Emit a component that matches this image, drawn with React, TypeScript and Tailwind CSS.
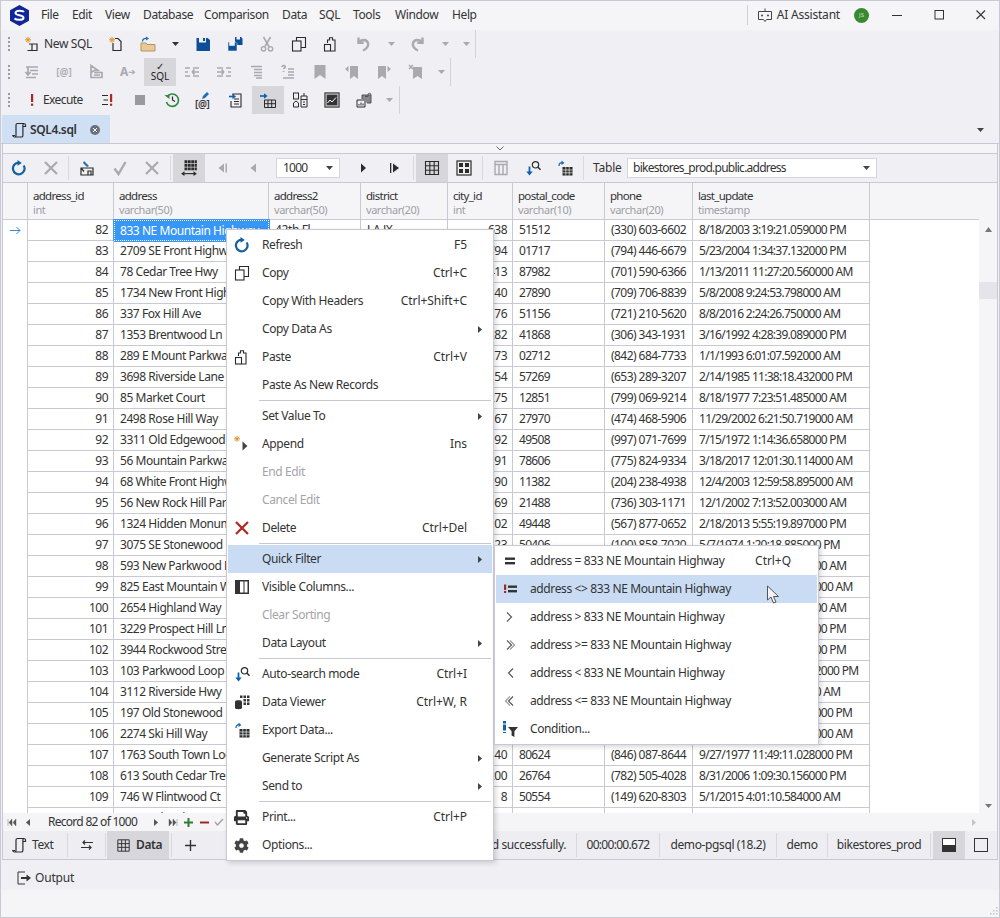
import type { ReactNode } from "react";
import { FaCog, FaPrint } from "react-icons/fa";

const Svg = ({ children, size = 16 }: { children: ReactNode; size?: number }) => (
  <svg width={size} height={size} viewBox="0 0 16 16" fill="none">
    {children}
  </svg>
);

const DARK = "#2b2b2b";
const GREY = "#a9a9ae";
const BLUE = "#15609f";

const Star = () => (
  <path d="M4 .8v6M1 3.8h6M1.9 1.7l4.2 4.2M6.1 1.7 1.9 5.9" stroke="#e0952a" strokeWidth="1" />
);
const Caret = ({ color = "#55555a" }: { color?: string }) => (
  <svg width="7" height="4" viewBox="0 0 7 4">
    <path d="M0 0h7L3.5 4z" fill={color} />
  </svg>
);
const Scroll = ({ color = DARK }: { color?: string }) => (
  <path
    d="M3 13.5H.8c.2 1 .8 1.5 1.7 1.5h6.8c1 0 1.6-.7 1.6-1.6V3c0-1 .6-1.5 1.5-1.5H5.5C4.5 1.5 4 2 4 3v10.5c0 1-.5 1.5-1.3 1.5M12 1.5c1 0 1.5.6 1.5 1.5v1.5H11"
    stroke={color}
    strokeWidth="1.2"
  />
);
const NewSqlIcon = () => (
  <Svg>
    <Star />
    <path d="M5 8h8v6.5H7M13 8v-.5M3.5 14.500H7c.5 0 1-.5 1-1V8" stroke={DARK} strokeWidth="1.2" />
  </Svg>
);
const NewDocIcon = () => (
  <Svg>
    <Star />
    <path d="M7 2.500h3l3 3v9H5V7" stroke={DARK} strokeWidth="1.2" />
  </Svg>
);
const OpenIcon = () => (
  <Svg>
    <path d="M1 7h5l1 1.500h8V15H1z" fill="#e9c998" stroke="#b8945c" />
    <path d="M2.500 5.500c0-2.500 2-3.500 4.500-3" stroke="#1c6fb8" strokeWidth="1.3" />
    <path d="M6 .5 9 2.600 6 4.600z" fill="#1c6fb8" />
  </Svg>
);
const SaveIcon = () => (
  <Svg>
    <path d="M1.500 2h2.500v4.500h7V2h1.500L15 4v11H1.500z" fill="#0b4f96" />
    <rect x="8" y="2" width="2" height="3" fill="#0b4f96" />
  </Svg>
);
const SaveAllIcon = () => (
  <Svg>
    <path d="M8 1h1.500v2.500h3.500V1h1l1.500 1.500V9H8z" fill="#0b4f96" />
    <path d="M1 6h1.500v3.500h5V6h1L10 7.500V15H1z" fill="#0b4f96" stroke="#f0eff4" strokeWidth=".6" />
  </Svg>
);
const CutIcon = () => (
  <Svg>
    <path d="M4.500 1 10 10.500M11.500 1 6 10.500" stroke={GREY} strokeWidth="1.6" />
    <circle cx="4.500" cy="12.800" r="2.200" stroke={GREY} strokeWidth="1.4" />
    <circle cx="11.500" cy="12.800" r="2.200" stroke={GREY} strokeWidth="1.4" />
  </Svg>
);
const CopyIcon = () => (
  <Svg>
    <path d="M5.500 5V1.500h9v10H10" stroke={DARK} strokeWidth="1.1" />
    <rect x="1.500" y="5" width="8.500" height="10" stroke={DARK} strokeWidth="1.1" />
  </Svg>
);
const PasteIcon = () => (
  <Svg>
    <path d="M4.500 7V4h2V1.800h3V4h2.500v11H8" stroke={DARK} strokeWidth="1.1" />
    <rect x="1.500" y="8.500" width="6" height="6.500" stroke={DARK} strokeWidth="1.1" />
  </Svg>
);
const UndoIcon = ({ flip }: { flip?: boolean }) => (
  <Svg>
    <g transform={flip ? "translate(16 0) scale(-1 1)" : undefined}>
      <path d="M3.500 1.500v5.200h5.200" stroke={GREY} strokeWidth="2.400" />
      <path d="M3.800 6.500C6 3.500 11 3 12.800 6.400 14.300 9.600 11.500 13 8 14.500" stroke={GREY} strokeWidth="2.400" />
    </g>
  </Svg>
);
const Lines = ({ d, color = GREY }: { d: string; color?: string }) => (
  <Svg>
    <path d={d} stroke={color} strokeWidth="1.7" />
  </Svg>
);
const ExecIcon = () => (
  <Svg>
    <rect x="7" y="2" width="2.200" height="8" fill="#a52a22" />
    <rect x="7" y="11.600" width="2.200" height="2.200" fill="#a52a22" />
  </Svg>
);
const ExecLinesIcon = () => (
  <Svg>
    <path d="M2 3.500h6M3.500 8h4.500M2 12.500h6" stroke={DARK} strokeWidth="1.2" />
    <rect x="10" y="2" width="2.200" height="8" fill="#b3261e" />
    <rect x="10" y="11.600" width="2.200" height="2.200" fill="#b3261e" />
  </Svg>
);
const HistoryIcon = () => (
  <Svg>
    <path d="M3 5a6.200 6.200 0 1 1-.6 5" stroke="#2d8a3c" strokeWidth="1.6" />
    <path d="M.5 3h5v4z" fill="#2d8a3c" />
    <path d="M8.500 4.500V8l2.500 1.500" stroke={DARK} strokeWidth="1.2" />
  </Svg>
);
const AtPencilIcon = () => (
  <div className="relative h-[18px] w-[16px]">
    <span className="absolute bottom-0 left-[-1px] text-[10px] leading-none font-semibold text-[#333]">[@]</span>
    <svg className="absolute top-0 left-[5px]" width="9" height="9" viewBox="0 0 9 9">
      <path d="M1 8 2 5 6 1l2 2-4 4z" fill="#1f6fb0" />
    </svg>
  </div>
);
const DocArrowIcon = () => (
  <Svg>
    <path d="M5 3.500V2h8v13H3V9" stroke={DARK} strokeWidth="1.1" />
    <path d="M6 7h5M6 9.500h5M6 12h5" stroke={DARK} strokeWidth="1" />
    <path d="M1 4.500h4.500" stroke="#0f5fb0" strokeWidth="1.6" />
    <path d="M4.500 1.800 8 4.500 4.500 7.200z" fill="#0f5fb0" />
  </Svg>
);
const TableArrowIcon = () => (
  <Svg>
    <path d="M4.500 8h11v7.500h-11zM8 8v7.500M11.700 8v7.500M4.500 11.700h11" stroke={DARK} strokeWidth="1" />
    <path d="M0 4h5" stroke="#0f5fb0" strokeWidth="1.6" />
    <path d="M4 1.200 7.600 4 4 6.800z" fill="#0f5fb0" />
  </Svg>
);
const BuilderIcon = () => (
  <Svg>
    <rect x="1.500" y="1" width="5" height="6" stroke={DARK} />
    <path d="M1.500 15V11L4 9l2.500 2v4z" stroke={DARK} />
    <path d="M9 4h6v11H9zM9 7.500h6M11 10h2M11 12.500h2M12 1v3" stroke={DARK} />
  </Svg>
);
const ChartIcon = () => (
  <Svg>
    <rect x="1" y="1" width="14" height="14" fill="#fff" stroke={DARK} strokeWidth="1.2" />
    <rect x="2.500" y="2.500" width="11" height="11" fill="#333" />
    <path d="m3.500 11 2.500-3 2 2 4-4.500" stroke="#fff" strokeWidth="1" />
  </Svg>
);
const StackIcon = () => (
  <Svg>
    <path d="M1 8h8v7H1z" stroke={DARK} />
    <path d="M3 13.500V12M5 13.500V10.500M7 13.500v-2" stroke={DARK} />
    <path d="M6 7V3h9v8h-4" fill="#888" stroke="#555" />
    <path d="M9 4.500h3V2.800a1.500 1.500 0 0 1 3 0" stroke="#555" />
  </Svg>
);
const RefreshIcon = () => (
  <Svg>
    <path d="M12.700 5.500a5.800 5.800 0 1 1-5-2.800" stroke={BLUE} strokeWidth="2.200" />
    <path d="M6.500 0v5.800L10.800 3z" fill={BLUE} />
  </Svg>
);
const XIcon = ({ color = GREY }: { color?: string }) => (
  <Svg>
    <path d="M2 2l12 12M14 2 2 14" stroke={color} strokeWidth="2.200" />
  </Svg>
);
const CheckIcon = () => (
  <Svg>
    <path d="m2.500 8.500 4 5.500L13.500 2" stroke={GREY} strokeWidth="2.400" />
  </Svg>
);
const ImportIcon = () => (
  <Svg>
    <path d="M2 8h12v7H2zM2 8l3 3.500M9 15v-4h3v4" stroke={DARK} strokeWidth="1.2" />
    <path d="m5 1 5 5-2 1-4-4z" fill="#1f6fb0" />
  </Svg>
);
const FitIcon = () => (
  <Svg size={18}>
    <path
      d="M4 1h2.500v2.500H4zM7 1h2.500v2.500H7zM10 1h2.500v2.500H10zM13 1h2v2.500h-2zM4 4.300h2.500v2.500H4zM7 4.300h2.500v2.500H7zM10 4.300h2.500v2.500H10zM13 4.300h2v2.500h-2zM4 7.600h2.500v2.500H4zM7 7.600h2.500v2.500H7zM10 7.600h2.500v2.500H10zM13 7.600h2v2.500h-2z"
      fill={DARK}
    />
    <path d="M3 13h10" stroke={DARK} />
    <path d="M1 13l3-2.200v4.400zM15 13l-3-2.200v4.400z" fill={DARK} />
  </Svg>
);
const TriLeft = ({ bar, color = GREY }: { bar?: boolean; color?: string }) => (
  <Svg>
    <path d="M10 3.500v9L4.500 8z" fill={color} />
    {bar && <rect x="11.500" y="3.500" width="1.500" height="9" fill={color} />}
  </Svg>
);
const TriRight = ({ bar }: { bar?: boolean }) => (
  <Svg>
    {bar && <rect x="3" y="3" width="1.300" height="10" fill={DARK} />}
    <path d={bar ? "M6 3.500v9L12 8z" : "M6 3.500v9L11 8z"} fill={DARK} />
  </Svg>
);
const GridIcon = () => (
  <Svg>
    <path d="M1.500 1.500h13v13h-13zM5.800 1.500v13M10.200 1.500v13M1.500 5.800h13M1.500 10.200h13" stroke={DARK} strokeWidth="1.1" />
  </Svg>
);
const CardsIcon = () => (
  <Svg>
    <rect x="1" y="1" width="14" height="14" stroke={DARK} strokeWidth="1.2" />
    <rect x="3" y="3" width="4" height="4" fill={DARK} />
    <rect x="9" y="3" width="4" height="4" fill={DARK} />
    <rect x="3" y="9" width="4" height="4" fill={DARK} />
    <rect x="9" y="9" width="4" height="4" fill={DARK} />
  </Svg>
);
const ColumnsGreyIcon = () => (
  <Svg>
    <path d="M2 1.500h12v13H2zM2 4.500h12M6 4.500v10M10 4.500v10" stroke={GREY} strokeWidth="1.4" />
  </Svg>
);
const SearchArrowIcon = () => (
  <Svg>
    <circle cx="10.500" cy="4.800" r="3.200" stroke={DARK} strokeWidth="1.2" />
    <path d="m13 7.200 2.500 2.600" stroke={DARK} strokeWidth="1.4" />
    <path d="M4.500 6.500v6" stroke="#0f5fb0" strokeWidth="1.8" />
    <path d="M1.300 11.500h6.400L4.500 15.500z" fill="#0f5fb0" />
  </Svg>
);
const ExportIcon = () => (
  <Svg>
    <path d="M5.500 7h10v8.500h-10z" fill={DARK} />
    <path d="M5.500 10h10M5.500 12.800h10M8.800 7v8.500M12.200 7v8.500" stroke="#f4f4f6" strokeWidth=".7" />
    <path d="M2 6c0-2.500 1.500-3.500 3.500-3.200" stroke="#1c6fb8" strokeWidth="1.3" />
    <path d="M4.500.5 7.500 3 4.500 5z" fill="#1c6fb8" />
  </Svg>
);
const ViewerIcon = () => (
  <Svg>
    <path d="M1 7.500c0-1.600 7-1.600 7 0V14c0 1.600-7 1.600-7 0z" fill="#333" />
    <path
      d="M6 1.500h2.500V4H6zM9.500 1.500H12V4H9.500zM13 1.500h2.500V4H13zM9.500 5H12v2.500H9.500zM13 5h2.500v2.500H13zM13 8.500h2.500V11H13zM9.500 8.500H12V11H9.500z"
      fill="#333"
    />
  </Svg>
);
const ColumnsIcon = () => (
  <Svg>
    <rect x="1" y="1" width="14" height="14" fill="#333" />
    <rect x="6" y="2.500" width="3.500" height="11" fill="#fff" />
    <rect x="10.500" y="2.500" width="3" height="11" fill="#fff" />
  </Svg>
);
const AppendIcon = () => (
  <Svg>
    <g transform="translate(-1 -1)">
      <Star />
    </g>
    <path d="M8.500 5.500v9l5-4.500z" fill="#444" />
  </Svg>
);
const ConditionIcon = () => (
  <Svg>
    <rect x="1" y="0" width="3" height="2.500" fill="#14609f" />
    <rect x="1" y="3.500" width="3" height="6" fill="#14609f" />
    <rect x="1" y="11" width="3" height="1" fill="#14609f" />
    <path d="M6 6h10l-3.600 4.200V16l-2.800-1.600v-4.200z" fill="#333" />
  </Svg>
);
const FilterEq = ({ bang }: { bang?: boolean }) => (
  <Svg>
    <rect x={bang ? 6 : 3} y="4.500" width={bang ? 9 : 10} height="2.400" fill="#333" />
    <rect x={bang ? 6 : 3} y="9" width={bang ? 9 : 10} height="2.400" fill="#333" />
    {bang && (
      <>
        <rect x="2" y="3.500" width="2.200" height="5.500" fill="#a52a22" />
        <rect x="2" y="10" width="2.200" height="2" fill="#a52a22" />
      </>
    )}
  </Svg>
);
const Chevron = ({ dir, twin }: { dir: "l" | "r"; twin?: boolean }) => (
  <Svg>
    <g transform={dir === "l" ? "translate(16 0) scale(-1 1)" : undefined} stroke="#555" strokeWidth="1.2">
      <path d="m5 3.500 4.500 4.500L5 12.500" />
      {twin && <path d="m8 3.500 4.500 4.500L8 12.500" stroke="#999" />}
    </g>
  </Svg>
);

const Btn = ({ children, active, w = "w-8" }: { children: ReactNode; active?: boolean; w?: string }) => (
  <div className={`flex h-7 shrink-0 items-center justify-center ${w} ${active ? "bg-[#d6d6db]" : ""}`}>{children}</div>
);
const Grip = () => (
  <div className="flex w-[15px] shrink-0 flex-col items-center gap-[2px]">
    <span className="h-[2px] w-[2px] bg-[#9a9aa2]" />
    <span className="h-[2px] w-[2px] bg-[#9a9aa2]" />
    <span className="h-[2px] w-[2px] bg-[#9a9aa2]" />
    <span className="h-[2px] w-[2px] bg-[#9a9aa2]" />
  </div>
);
const RowSep = () => <div className="h-7 w-px bg-[#d2d2da]" />;
const BarSep = ({ className = "" }: { className?: string }) => <div className={`h-[24px] w-px shrink-0 bg-[#d8d8de] ${className}`} />;

const menus = [
  ["File", "w-[31px]"],
  ["Edit", "w-[33px]"],
  ["View", "w-[38px]"],
  ["Database", "w-[61px]"],
  ["Comparison", "w-[78px]"],
  ["Data", "w-[37px]"],
  ["SQL", "w-[34px]"],
  ["Tools", "w-[42px]"],
  ["Window", "w-[57px]"],
  ["Help", "w-[34px]"],
];

type Row = [number, string, string, string, string, string, string];
const rows: Row[] = [
  [82, "833 NE Mountain Highway", "638", "51512", "(330) 603-6602", "8/18/2003 3:19:21.059000 PM", "42th Fl"],
  [83, "2709 SE Front Highway", "794", "01717", "(794) 446-6679", "5/23/2004 1:34:37.132000 PM", ""],
  [84, "78 Cedar Tree Hwy", "413", "87982", "(701) 590-6366", "1/13/2011 11:27:20.560000 AM", ""],
  [85, "1734 New Front Highway", "140", "27890", "(709) 706-8839", "5/8/2008 9:24:53.798000 AM", ""],
  [86, "337 Fox Hill Ave", "176", "51156", "(721) 210-5620", "8/8/2016 2:24:26.750000 AM", ""],
  [87, "1353 Brentwood Ln", "282", "41868", "(306) 343-1931", "3/16/1992 4:28:39.089000 PM", ""],
  [88, "289 E Mount Parkway", "173", "02712", "(842) 684-7733", "1/1/1993 6:01:07.592000 AM", ""],
  [89, "3698 Riverside Lane", "154", "57269", "(653) 289-3207", "2/14/1985 11:38:18.432000 PM", ""],
  [90, "85 Market Court", "275", "12851", "(799) 069-9214", "8/18/1977 7:23:51.485000 AM", ""],
  [91, "2498 Rose Hill Way", "167", "27970", "(474) 468-5906", "11/29/2002 6:21:50.719000 AM", ""],
  [92, "3311 Old Edgewood Court", "192", "49508", "(997) 071-7699", "7/15/1972 1:14:36.658000 PM", ""],
  [93, "56 Mountain Parkway", "191", "78606", "(775) 824-9334", "3/18/2017 12:01:30.114000 AM", ""],
  [94, "68 White Front Highway", "190", "11382", "(204) 238-4938", "12/4/2003 12:59:58.895000 AM", ""],
  [95, "56 New Rock Hill Parkway", "169", "21488", "(736) 303-1171", "12/1/2002 7:13:52.003000 AM", ""],
  [96, "1324 Hidden Monument Ave", "102", "49448", "(567) 877-0652", "2/18/2013 5:55:19.897000 PM", ""],
  [97, "3075 SE Stonewood Highway", "123", "50406", "(100) 858-7020", "5/7/1974 1:20:18.885000 PM", ""],
  [98, "593 New Parkwood Drive", "118", "30215", "(412) 557-1180", "6/14/2001 8:22:40.315000 AM", ""],
  [99, "825 East Mountain Way", "207", "64120", "(318) 220-4471", "11/19/2004 3:41:12.600000 AM", ""],
  [100, "2654 Highland Way", "144", "73091", "(605) 418-7726", "4/27/1998 6:05:33.120000 AM", ""],
  [101, "3229 Prospect Hill Ln", "231", "15847", "(209) 631-2054", "9/12/2007 2:36:08.470000 PM", ""],
  [102, "3944 Rockwood Street", "158", "90236", "(873) 145-6098", "3/24/2010 5:18:47.250000 PM", ""],
  [103, "103 Parkwood Loop", "263", "28461", "(540) 792-3316", "10/22/1985 10:32:41.612000 PM", ""],
  [104, "3112 Riverside Hwy", "176", "47703", "(761) 308-9425", "5/9/2012 9:10:44.720000 AM", ""],
  [105, "197 Old Stonewood Highway", "129", "36158", "(427) 964-0137", "12/3/1999 11:45:07.260000 PM", ""],
  [106, "2274 Ski Hill Way", "251", "82094", "(158) 573-2260", "12/6/2005 10:17:33.940000 AM", ""],
  [107, "1763 South Town Loop", "140", "80624", "(846) 087-8644", "9/27/1977 11:49:11.028000 PM", ""],
  [108, "613 South Cedar Tree", "200", "26764", "(782) 505-4028", "8/31/2006 1:09:30.156000 PM", ""],
  [109, "746 W Flintwood Ct", "8", "50554", "(149) 620-8303", "5/1/2015 4:01:10.584000 AM", ""],
  [110, "4120 Lake View Dr", "136", "71329", "(512) 774-2093", "4/22/1996 7:31:05.214000 PM", ""],
];

const columns = [
  ["address_id", "int"],
  ["address", "varchar(50)"],
  ["address2", "varchar(50)"],
  ["district", "varchar(20)"],
  ["city_id", "int"],
  ["postal_code", "varchar(10)"],
  ["phone", "varchar(20)"],
  ["last_update", "timestamp"],
];
const gridCols = "grid-cols-[25px_86px_155px_92px_87px_65px_92px_88px_177px]";

type MenuItem = {
  label?: string;
  shortcut?: string;
  icon?: ReactNode;
  arrow?: boolean;
  disabled?: boolean;
  hover?: boolean;
  sep?: boolean;
};
const contextMenu: MenuItem[] = [
  { label: "Refresh", shortcut: "F5", icon: <RefreshIcon /> },
  { label: "Copy", shortcut: "Ctrl+C", icon: <CopyIcon /> },
  { label: "Copy With Headers", shortcut: "Ctrl+Shift+C" },
  { label: "Copy Data As", arrow: true },
  { label: "Paste", shortcut: "Ctrl+V", icon: <PasteIcon /> },
  { label: "Paste As New Records" },
  { sep: true },
  { label: "Set Value To", arrow: true },
  { label: "Append", shortcut: "Ins", icon: <AppendIcon /> },
  { label: "End Edit", disabled: true },
  { label: "Cancel Edit", disabled: true },
  { label: "Delete", shortcut: "Ctrl+Del", icon: <XIcon color="#b3261e" /> },
  { sep: true },
  { label: "Quick Filter", arrow: true, hover: true },
  { label: "Visible Columns...", icon: <ColumnsIcon /> },
  { label: "Clear Sorting", disabled: true },
  { label: "Data Layout", arrow: true },
  { sep: true },
  { label: "Auto-search mode", shortcut: "Ctrl+I", icon: <SearchArrowIcon /> },
  { label: "Data Viewer", shortcut: "Ctrl+W, R", icon: <ViewerIcon /> },
  { label: "Export Data...", icon: <ExportIcon /> },
  { label: "Generate Script As", arrow: true },
  { label: "Send to", arrow: true },
  { sep: true },
  { label: "Print...", shortcut: "Ctrl+P", icon: <FaPrint size={15} color="#333" /> },
  { label: "Options...", icon: <FaCog size={15} color="#444" /> },
];
const subMenu: MenuItem[] = [
  { label: "address = 833 NE Mountain Highway", shortcut: "Ctrl+Q", icon: <FilterEq /> },
  { label: "address <> 833 NE Mountain Highway", icon: <FilterEq bang />, hover: true },
  { label: "address > 833 NE Mountain Highway", icon: <Chevron dir="r" /> },
  { label: "address >= 833 NE Mountain Highway", icon: <Chevron dir="r" twin /> },
  { label: "address < 833 NE Mountain Highway", icon: <Chevron dir="l" /> },
  { label: "address <= 833 NE Mountain Highway", icon: <Chevron dir="l" twin /> },
  { label: "Condition...", icon: <ConditionIcon /> },
];

function ContextMenuRow({ item }: { item: MenuItem }) {
  if (item.sep) return <div className="my-px ml-[31px] mr-px h-px bg-[#c9c9d4]" />;
  return (
    <div className={`flex h-7 items-center ${item.hover ? "bg-[#c9dcf4]" : ""}`}>
      <div className="flex w-[27px] shrink-0 items-center justify-center">{item.icon}</div>
      <span className={`ml-[7px] ${item.disabled ? "text-[#a4a4a8]" : "text-[#333]"}`}>{item.label}</span>
      <span className="ml-auto mr-[25px] tracking-[-0.05px] text-[#333]">{item.shortcut}</span>
      {item.arrow && (
        <svg className="absolute right-[10px]" width="4" height="7" viewBox="0 0 4 7">
          <path d="M0 0v7l4-3.500z" fill="#444" />
        </svg>
      )}
    </div>
  );
}

export default function App() {
  return (
    <div className="relative h-[918px] w-[1000px] overflow-hidden border border-[#c9c9d6] bg-[#f0eff4] font-['Noto_Sans',sans-serif] text-[12px] tracking-[-0.38px] text-[#333]">
      {/* title bar */}
      <div className="flex h-[29px] items-center bg-[#f5f5f8] pb-px">
        <svg className="ml-[8px] shrink-0" width="21" height="23" viewBox="0 0 21 23">
          <path d="M10.500 1 20 6.200v10.600L10.500 22 1 16.800V6.200z" fill="#12269c" />
          <path d="M15 8c-1-1.500-8-2-8.500 .8C6 12 15 10.500 14.500 14c-.4 2.500-7.500 2.200-9 .3" stroke="#fff" strokeWidth="2" fill="none" />
        </svg>
        <div className="ml-[2px] flex">
          {menus.map(([name, w]) => (
            <span key={name} className={`${w} shrink-0 pl-[9px] whitespace-nowrap`}>
              {name}
            </span>
          ))}
        </div>
        <div className="ml-auto h-5 w-px bg-[#d0d0d8]" />
        <svg className="ml-[9px]" width="16" height="14" viewBox="0 0 16 14" fill="none">
          <path d="M1.500 3.500h13v8h-5l-1.500 2-1.500-2h-5zM8 .5v3" stroke="#444" />
          <circle cx="5" cy="7.500" r="1" fill="#444" />
          <circle cx="11" cy="7.500" r="1" fill="#444" />
        </svg>
        <span className="ml-[4px] tracking-[-0.2px]">AI Assistant</span>
        <div className="ml-[14px] flex h-[15px] w-[15px] items-center justify-center rounded-full bg-[#38892f] text-[6px] tracking-normal text-[#cfe6c9]">
          JS
        </div>
        <svg className="ml-[22px]" width="12" height="12" viewBox="0 0 12 12">
          <path d="M1 6.500h10" stroke="#333" strokeWidth="1" />
        </svg>
        <svg className="ml-[30px]" width="12" height="12" viewBox="0 0 12 12" fill="none">
          <rect x="2" y="1.500" width="8.500" height="8.500" stroke="#333" strokeWidth="1" />
        </svg>
        <svg className="ml-[30px] mr-[12px]" width="12" height="12" viewBox="0 0 12 12" fill="none">
          <path d="M1.500 1.500l8.500 8.500M10 1.500 1.500 10" stroke="#333" strokeWidth="1.100" />
        </svg>
      </div>

      {/* toolbars */}
      <div className="flex h-7 items-center">
        <Grip />
        <Btn w="w-[84px] justify-start pl-[8px] gap-[4px]">
          <NewSqlIcon />
          <span>New SQL</span>
        </Btn>
        <Btn><NewDocIcon /></Btn>
        <Btn><OpenIcon /></Btn>
        <Btn w="w-[23px]"><Caret color="#333" /></Btn>
        <Btn><SaveIcon /></Btn>
        <Btn><SaveAllIcon /></Btn>
        <Btn><CutIcon /></Btn>
        <Btn><CopyIcon /></Btn>
        <Btn><PasteIcon /></Btn>
        <Btn><UndoIcon /></Btn>
        <Btn w="w-[24px]"><Caret color={GREY} /></Btn>
        <Btn w="w-[30px]"><UndoIcon flip /></Btn>
        <Btn w="w-[24px]"><Caret color={GREY} /></Btn>
        <Btn w="w-[18px]"><Caret color={GREY} /></Btn>
        <RowSep />
      </div>
      <div className="flex h-7 items-center">
        <Grip />
        <Btn><Lines d="M2 3h12M6 6.500h8M8 10h6M2 13.500h10M4 3v7M1.500 8 4 11l2.500-3" /></Btn>
        <Btn><span className="text-[10px] font-semibold tracking-normal text-[#a9a9ae]">[@]</span></Btn>
        <Btn><Lines d="M3 1.500v7l3-2 4 0zM6 8.500h8v5H3V9M6 11h6" /></Btn>
        <Btn>
          <span className="text-[12px] font-bold tracking-normal text-[#a9a9ae]">A</span>
          <span className="text-[9px] text-[#a9a9ae]">➔</span>
        </Btn>
        <Btn active>
          <div className="flex flex-col items-center leading-none text-[#222]">
            <span className="text-[10px] leading-[9px]">✓</span>
            <span className="text-[10px] leading-[11px] tracking-normal">SQL</span>
          </div>
        </Btn>
        <Btn><Lines d="M1 4h5M1 8h3M1 12h5M9 4h6M9 12h6M8 8h7M8 8l2.500-2.500M8 8l2.500 2.500" /></Btn>
        <Btn><Lines d="M1 4h6M1 12h6M1 8h7M8 8 5.500 5.500M8 8l-2.500 2.500M10 4h5M10 12h5M12 8h3" /></Btn>
        <Btn><Lines d="M3 2.500h11M6 5.500h8M6 8.500h8M6 11.500h8M8 14h6" /></Btn>
        <Btn><Lines d="M2 3c0-2 4-2 3 .5L3.500 5M3.500 7v1M8 5h6M8 8h6M8 11h6M3 14h11" /></Btn>
        <Btn><Svg><path d="M2.500 1h11v14L8 11l-5.500 4z" fill={GREY} /></Svg></Btn>
        <Btn><Svg><path d="M6 2h8v13l-4-3-4 3zM1 5l3.500-3v6z" fill={GREY} /></Svg></Btn>
        <Btn><Svg><path d="M2 2h8v13l-4-3-4 3zM15 5l-3.500-3v6z" fill={GREY} /></Svg></Btn>
        <Btn><Svg><path d="M5 3h9v12l-4.500-3L5 15z" fill={GREY} /><path d="m1 1 4 4m0-4L1 5" stroke={GREY} strokeWidth="1.500" /></Svg></Btn>
        <Btn w="w-[18px]"><Caret color={GREY} /></Btn>
        <RowSep />
      </div>
      <div className="flex h-7 items-center">
        <Grip />
        <Btn w="w-[76px] justify-start pl-[8px] gap-[3px]">
          <ExecIcon />
          <span className="tracking-[-0.6px]">Execute</span>
        </Btn>
        <Btn><ExecLinesIcon /></Btn>
        <Btn><Svg><rect x="3" y="3" width="10" height="10" fill="#9a9a9e" /></Svg></Btn>
        <Btn><HistoryIcon /></Btn>
        <Btn><AtPencilIcon /></Btn>
        <Btn><DocArrowIcon /></Btn>
        <Btn active><TableArrowIcon /></Btn>
        <Btn><BuilderIcon /></Btn>
        <Btn><ChartIcon /></Btn>
        <Btn><StackIcon /></Btn>
        <Btn w="w-[19px]"><Caret color={GREY} /></Btn>
        <RowSep />
      </div>

      {/* document tab strip */}
      <div className="flex h-[30px] items-end border-b border-[#c9c9d6] pl-px">
        <div className="flex h-[28px] w-[108px] items-center bg-[#cfe0f5] pl-[10px] pt-px">
          <Svg>
            <Scroll />
          </Svg>
          <span className="ml-[2px] font-semibold text-[#333]">SQL4.sql</span>
          <div className="ml-[13px] flex h-[10px] w-[10px] items-center justify-center rounded-full bg-[#6b6f7b]">
            <svg width="6" height="6" viewBox="0 0 6 6">
              <path d="m1 1 4 4m0-4L1 5" stroke="#fff" strokeWidth="1" />
            </svg>
          </div>
        </div>
        <div className="mb-[11px] ml-auto mr-[15px]">
          <Caret color="#444" />
        </div>
      </div>

      {/* data editor */}
      <div className="mx-px border-x border-[#c9c9d6]">
        <div className="flex h-[10px] items-center justify-center border-b border-[#c9c9d6] bg-[#f5f5f8]">
          <svg width="8" height="5" viewBox="0 0 8 5" fill="none">
            <path d="m.5.5 3.500 3.500L7.500.5" stroke="#666" />
          </svg>
        </div>
        <div className="flex h-[29px] items-center border-b border-[#c9c9d6]">
          <Btn><RefreshIcon /></Btn>
          <Btn><XIcon /></Btn>
          <BarSep className="ml-px mr-[2px]" />
          <Btn><ImportIcon /></Btn>
          <div className="w-px" />
          <Btn><CheckIcon /></Btn>
          <Btn><XIcon /></Btn>
          <BarSep className="ml-[2px] mr-[2px]" />
          <Btn active><FitIcon /></Btn>
          <div className="w-px" />
          <Btn><TriLeft bar /></Btn>
          <Btn><TriLeft /></Btn>
          <div className="ml-[6px] flex h-[20px] w-[64px] items-center border border-[#d5d5dc] bg-white pl-[6px]">
            <span className="tracking-[-0.8px]">1000</span>
            <div className="ml-auto mr-[6px]"><Caret color="#444" /></div>
          </div>
          <div className="w-[7px]" />
          <Btn><TriRight /></Btn>
          <Btn><TriRight bar /></Btn>
          <BarSep className="ml-[2px] mr-[2px]" />
          <Btn active><GridIcon /></Btn>
          <Btn><CardsIcon /></Btn>
          <BarSep className="ml-[2px] mr-[2px]" />
          <Btn><ColumnsGreyIcon /></Btn>
          <Btn><SearchArrowIcon /></Btn>
          <Btn><ExportIcon /></Btn>
          <BarSep className="ml-[2px]" />
          <span className="ml-[9px] w-[34px] shrink-0 tracking-[-0.2px]">Table</span>
          <div className="flex h-[20px] w-[250px] items-center border border-[#d5d5dc] bg-white pl-[5px]">
            <span className="tracking-[-0.75px]">bikestores_prod.public.address</span>
            <div className="ml-auto mr-[6px]"><Caret color="#444" /></div>
          </div>
        </div>

        {/* grid */}
        <div className="flex h-[630px]">
          <div className="flex h-full w-[977px] flex-col overflow-hidden bg-white">
            <div className={`grid h-[37px] shrink-0 ${gridCols} border-b border-[#c9c9d6] bg-[#f5f5f8]`}>
              <div className="border-r border-[#c9c9d6]" />
              {columns.map(([name, type]) => (
                <div key={name} className="flex flex-col border-r border-[#c9c9d6] pl-[5px] pt-[6px]">
                  <span className="text-[11.5px] leading-[14px] tracking-[-0.7px]">{name}</span>
                  <span className="text-[11px] leading-[13px] tracking-[-0.45px] text-[#9e9ea4]">{type}</span>
                </div>
              ))}
            </div>
            {rows.map(([id, address, city, postal, phone, ts, address2], i) => (
              <div key={id} className={`grid h-[21px] shrink-0 ${gridCols} items-stretch`}>
                <div className="flex items-center justify-center border-r border-[#c9c9d6]">
                  {i === 0 && (
                    <svg width="11" height="9" viewBox="0 0 11 9" fill="none">
                      <path d="M0 4.500h10M6.500 1 10 4.500 6.500 8" stroke="#3a86d8" />
                    </svg>
                  )}
                </div>
                <div className="flex items-center justify-end border-r border-b border-[#c9c9d6] pr-[5px] tracking-[-0.5px]">{id}</div>
                <div
                  className={
                    i === 0
                      ? "flex items-center overflow-hidden border border-dotted border-white bg-[#3897f5] pl-[5px] whitespace-nowrap tracking-[-0.45px] text-white outline outline-[#3897f5]"
                      : "flex items-center overflow-hidden border-r border-b border-[#c9c9d6] pl-[6px] whitespace-nowrap tracking-[-0.45px]"
                  }
                >
                  {address}
                </div>
                <div className="flex items-center border-r border-b border-[#c9c9d6] pl-[6px]">{address2}</div>
                <div className="flex items-center border-r border-b border-[#c9c9d6] pl-[6px]">{i === 0 ? "LA JX" : ""}</div>
                <div className="flex items-center justify-end border-r border-b border-[#c9c9d6] pr-[5px] tracking-[-0.5px]">{city}</div>
                <div className="flex items-center border-r border-b border-[#c9c9d6] pl-[6px] tracking-[-0.7px]">{postal}</div>
                <div className="flex items-center border-r border-b border-[#c9c9d6] pl-[6px] whitespace-nowrap tracking-[-0.55px]">{phone}</div>
                <div className="flex items-center border-r border-b border-[#c9c9d6] pl-[6px] whitespace-nowrap tracking-[-0.72px]">{ts}</div>
              </div>
            ))}
          </div>
          <div className="flex h-full w-[18px] flex-col items-center bg-[#f5f5f8] pt-[37px]">
            <div className="mt-[7px] h-[4px]">
              <svg width="7" height="5" viewBox="0 0 7 5">
                <path d="M0 5h7L3.500 0z" fill="#777" />
              </svg>
            </div>
            <div className="mt-[51px] h-[17px] w-full bg-[#e4e4ea]" />
            <div className="mt-auto mb-[5px]">
              <Caret color="#777" />
            </div>
          </div>
        </div>

        {/* record navigator */}
        <div className="flex h-[18px] items-center bg-[#f5f5f8] pl-[1px]">
          <svg className="ml-[3px]" width="10" height="7" viewBox="0 0 10 7">
            <path d="M1 0v7M5 0v7L2 3.500zM9 0v7L6 3.500z" fill="#555" stroke="#555" strokeWidth=".4" />
          </svg>
          <svg className="ml-[9px]" width="4" height="7" viewBox="0 0 4 7">
            <path d="M4 0v7L0 3.500z" fill="#555" />
          </svg>
          <span className="ml-[18px] w-[106px] shrink-0 tracking-[-0.72px]">Record 82 of 1000</span>
          <svg width="4" height="7" viewBox="0 0 4 7">
            <path d="M0 0v7l4-3.500z" fill="#555" />
          </svg>
          <svg className="ml-[10px]" width="10" height="7" viewBox="0 0 10 7">
            <path d="M9 0v7M1 0v7l3-3.500zM5 0v7l3-3.500z" fill="#555" stroke="#555" strokeWidth=".4" />
          </svg>
          <svg className="ml-[6px]" width="9" height="9" viewBox="0 0 9 9">
            <path d="M4.500 0v9M0 4.500h9" stroke="#2e7d32" strokeWidth="2" />
          </svg>
          <svg className="ml-[7px]" width="9" height="9" viewBox="0 0 9 9">
            <path d="M0 4.500h9" stroke="#a02a22" strokeWidth="2" />
          </svg>
          <svg className="ml-[5px]" width="10" height="8" viewBox="0 0 10 8" fill="none">
            <path d="m1 4 2.500 3L9 1" stroke="#a0a0a4" strokeWidth="1.300" />
          </svg>
          <div className="ml-auto mr-[21px]">
            <svg width="4" height="7" viewBox="0 0 4 7">
              <path d="M0 0v7l4-3.500z" fill="#c4c4c8" />
            </svg>
          </div>
        </div>

        {/* view switcher + status */}
        <div className="flex h-[29px] items-center border-b border-[#c9c9d6] bg-[#eeeef2]">
          <div className="flex h-full w-[64px] items-center gap-[4px] pl-[9px]">
            <Svg>
              <Scroll />
            </Svg>
            <span>Text</span>
          </div>
          <BarSep />
          <div className="flex h-full w-[37px] items-center justify-center">
            <svg width="12" height="10" viewBox="0 0 12 10" fill="none">
              <path d="M12 2.500H2M4 .5l-2 2 2 2M0 7.500h10M8 5.500l2 2-2 2" stroke="#333" strokeWidth="1.200" />
            </svg>
          </div>
          <BarSep />
          <div className="ml-px flex h-full w-[62px] items-center gap-[6px] bg-[#d6d6db] pl-[10px]">
            <Svg size={13}>
              <path d="M1 1h14v14H1zM5.700 1v14M10.300 1v14M1 5.700h14M1 10.300h14" stroke="#333" strokeWidth="1.200" />
            </Svg>
            <span className="font-semibold">Data</span>
          </div>
          <BarSep className="ml-[2px]" />
          <div className="flex h-full w-[37px] items-center justify-center">
            <svg width="11" height="11" viewBox="0 0 11 11">
              <path d="M5.500 0v11M0 5.500h11" stroke="#333" strokeWidth="1.400" />
            </svg>
          </div>
          <div className="ml-auto flex h-full items-center">
            <span className="pr-[10px] whitespace-nowrap">Query executed successfully.</span>
            <BarSep />
            <span className="w-[82px] text-center tracking-[-0.7px]">00:00:00.672</span>
            <BarSep />
            <span className="w-[116px] text-center">demo-pgsql (18.2)</span>
            <BarSep />
            <span className="w-[50px] text-center">demo</span>
            <BarSep />
            <span className="w-[102px] text-center">bikestores_prod</span>
            <BarSep />
            <div className="ml-[2px] flex h-full w-8 items-center justify-center bg-[#d6d6db]">
              <svg width="14" height="14" viewBox="0 0 14 14">
                <rect x=".5" y=".5" width="13" height="13" fill="#fff" stroke="#333" />
                <rect x="1" y="7" width="12" height="6" fill="#333" />
              </svg>
            </div>
            <div className="flex h-full w-8 items-center justify-center">
              <svg width="14" height="14" viewBox="0 0 14 14" fill="none">
                <rect x=".5" y=".5" width="13" height="13" stroke="#333" />
              </svg>
            </div>
          </div>
        </div>
      </div>

      {/* output + status */}
      <div className="flex h-[30px] items-center gap-[3px] pl-[16px] pt-[5px]">
        <svg width="15" height="14" viewBox="0 0 15 14" fill="none">
          <path d="M8 1H1v12h7" stroke="#333" />
          <path d="M4 7h7" stroke="#333" strokeWidth="2" />
          <path d="M9.500 3.500 14 7l-4.500 3.500z" fill="#333" />
        </svg>
        <span className="tracking-[-0.2px]">Output</span>
      </div>
      <div className="flex h-[27px] items-end justify-end bg-[#f5f5f8] pb-[2px] pr-[1px]">
        <svg width="9" height="9" viewBox="0 0 9 9">
          <path d="M7 1h1.500v1.500H7zM4 4h1.500v1.500H4zM7 4h1.500v1.500H7zM1 7h1.500v1.500H1zM4 7h1.500v1.500H4zM7 7h1.500v1.500H7z" fill="#c2c2ca" />
        </svg>
      </div>

      {/* context menu */}
      <div className="absolute top-[228px] left-[225px] w-[268px] border border-[#c9c9d6] bg-white p-px shadow-[2px_2px_5px_rgba(0,0,0,0.16)]">
        {contextMenu.map((item, i) => (
          <div key={i} className="relative flex flex-col justify-center">
            <ContextMenuRow item={item} />
          </div>
        ))}
      </div>

      {/* quick filter submenu */}
      <div className="absolute top-[544px] left-[493px] w-[325px] border border-[#c9c9d6] bg-white p-px shadow-[2px_2px_5px_rgba(0,0,0,0.16)]">
        {subMenu.map((item) => (
          <div key={item.label} className={`flex h-7 items-center ${item.hover ? "bg-[#c9dcf4]" : ""}`}>
            <div className="flex w-[27px] shrink-0 items-center justify-center">{item.icon}</div>
            <span className="ml-[7px]">{item.label}</span>
            {item.shortcut && <span className="ml-auto mr-[26px] tracking-[-0.05px]">{item.shortcut}</span>}
          </div>
        ))}
      </div>

      {/* mouse cursor */}
      <svg className="absolute top-[584px] left-[765px]" width="14" height="20" viewBox="0 0 14 20">
        <path d="M1.500 1v14l3.500-3 2.500 6 2.500-1-2.500-5.500H12.500z" fill="#f4f4f6" stroke="#555" strokeWidth="1" />
      </svg>
    </div>
  );
}
